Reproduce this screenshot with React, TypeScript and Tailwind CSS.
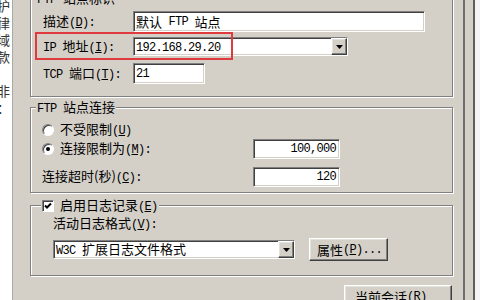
import React from 'react';

// classic win2k bevels
const sunken =
  'border border-t-[#808080] border-l-[#808080] border-r-white border-b-white shadow-[inset_1px_1px_0_#404040,inset_-1px_-1px_0_#d4d0c8] bg-white';
const raised =
  'border border-t-white border-l-white border-r-[#404040] border-b-[#404040] shadow-[inset_-1px_-1px_0_#808080,inset_1px_1px_0_#e4e2dc] bg-[#d4d0c8]';
const etched =
  'border border-[#808080] shadow-[inset_1px_1px_0_#ffffff,1px_1px_0_#ffffff] min-w-0';

function Lat({ children }: { children: React.ReactNode }) {
  return (
    <span className="font-['Liberation_Mono',monospace] text-[12px] tracking-[-0.7px] whitespace-pre">
      {children}
    </span>
  );
}

function Key({ k, colon }: { k: string; colon?: boolean }) {
  return (
    <Lat>
      (<u>{k}</u>){colon ? ':' : ''}
    </Lat>
  );
}

function DropButton() {
  return (
    <div className={`${raised} w-[16px] h-full flex items-center justify-center`}>
      <svg width="7" height="4" viewBox="0 0 7 4">
        <polygon points="0,0 7,0 3.5,4" fill="#000" />
      </svg>
    </div>
  );
}

function Radio({ checked }: { checked?: boolean }) {
  return (
    <div className="w-[12px] h-[12px] rounded-full border border-t-[#808080] border-l-[#808080] border-r-white border-b-white bg-white shadow-[inset_1px_1px_0_#404040] flex items-center justify-center">
      {checked && <div className="w-[4px] h-[4px] rounded-full bg-black" />}
    </div>
  );
}

function LeftStrip() {
  const chars = ['护', '律', '域', '款', '\u3000', '非', '：'];
  return (
    <div className="w-[12px] bg-white overflow-hidden shrink-0">
      <div className="-mt-[3px] -ml-[3px] leading-[17px] text-[13px] text-[#333]">
        {chars.map((c, i) => (
          <div key={i}>{c}</div>
        ))}
      </div>
    </div>
  );
}

export default function App() {
  return (
    <div className="w-[480px] h-[300px] overflow-hidden flex bg-[#d4d0c8] text-black font-['Noto_Sans_CJK_SC',sans-serif] text-[13px] leading-[16px]">
      <LeftStrip />
      <div className="w-px bg-[#a9a9a9] shrink-0" />

      <main className="w-[450px] shrink-0 pl-[17px] flex flex-col">
        {/* FTP 站点标识 */}
        <fieldset className={`${etched} w-[423px] -mt-[10px] pl-[5px]`}>
          <legend className="px-[1px] h-[16px] bg-[#d4d0c8]">
            <Lat>FTP </Lat>站点标识
          </legend>

          <div className="pt-[5px] pl-[7px] pb-[12px]">
            <div className="flex items-center h-[21px]">
              <div className="w-[90px]">
                描述<Key k="D" colon />
              </div>
              <div className={`${sunken} w-[292px] h-[21px] flex items-center pl-[2px]`}>
                默认<Lat> FTP </Lat>站点
              </div>
            </div>

            <div className="relative flex items-center h-[19px] mt-[5px]">
              <div className="w-[90px]">
                <Lat>IP </Lat>地址<Key k="I" colon />
              </div>
              <div className={`${sunken} w-[215px] h-[19px] flex items-center pl-[2px]`}>
                <div className="flex-1">
                  <Lat>192.168.29.20</Lat>
                </div>
                <DropButton />
              </div>
              {/* red annotation box */}
              <div className="absolute -left-[8px] -top-[5px] w-[198px] h-[28px] border-2 border-[#e0393e]" />
            </div>

            <div className="flex items-center h-[21px] mt-[7px]">
              <div className="w-[90px]">
                <Lat>TCP </Lat>端口<Key k="T" colon />
              </div>
              <div className={`${sunken} w-[72px] h-[21px] flex items-center pl-[2px]`}>
                <Lat>21</Lat>
              </div>
            </div>
          </div>
        </fieldset>

        {/* FTP 站点连接 */}
        <fieldset className={`${etched} w-[423px] mt-[2px] pl-[5px]`}>
          <legend className="px-[1px] h-[16px] bg-[#d4d0c8]">
            <Lat>FTP </Lat>站点连接
          </legend>

          <div className="pl-[6px] pb-[5px]">
            <div className="flex items-center gap-[6px] h-[16px] mt-[7px]">
              <Radio />
              <span>
                不受限制<Key k="U" />
              </span>
            </div>

            <div className="flex items-center h-[20px] mt-[1px]">
              <div className="w-[211px] flex items-center gap-[6px]">
                <Radio checked />
                <span>
                  连接限制为<Key k="M" colon />
                </span>
              </div>
              <div className={`${sunken} w-[87px] h-[20px] flex items-center justify-end pr-[3px]`}>
                <Lat>100,000</Lat>
              </div>
            </div>

            <div className="flex items-center h-[20px] mt-[8px]">
              <div className="w-[211px]">
                连接超时(秒)<Key k="C" colon />
              </div>
              <div className={`${sunken} w-[87px] h-[20px] flex items-center justify-end pr-[3px]`}>
                <Lat>120</Lat>
              </div>
            </div>
          </div>
        </fieldset>

        {/* 日志记录 */}
        <fieldset className={`${etched} w-[423px] mt-[4px] pl-[10px]`}>
          <legend className="px-[1px] h-[16px] bg-[#d4d0c8]">
            <span className="inline-flex items-center gap-[6px] h-[16px]">
              <span className="w-[12px] h-[12px] border border-t-[#808080] border-l-[#808080] border-r-white border-b-white bg-white shadow-[inset_1px_1px_0_#404040] flex items-center justify-center">
                <svg width="8" height="8" viewBox="0 0 8 8">
                  <polyline points="1,3.5 3,5.5 7,1.5" fill="none" stroke="#000" strokeWidth="2" />
                </svg>
              </span>
              <span>
                启用日志记录<Key k="E" />
              </span>
            </span>
          </legend>

          <div className="pl-[12px] pb-[14px]">
            <div className="mt-[2px] h-[16px]">
              活动日志格式<Key k="V" colon />
            </div>

            <div className="flex items-center gap-[14px] h-[23px] mt-[7px]">
              <div className={`${sunken} w-[242px] h-[19px] flex items-center pl-[2px]`}>
                <div className="flex-1">
                  <Lat>W3C </Lat>扩展日志文件格式
                </div>
                <DropButton />
              </div>
              <div className={`${raised} w-[79px] h-[23px] flex items-center pl-[7px]`}>
                属性<Key k="P" />
                <Lat>...</Lat>
              </div>
            </div>
          </div>
        </fieldset>

        <div className="mt-[9px] pl-[314px]">
          <div className={`${raised} w-[108px] h-[23px] flex items-center pl-[10px]`}>
            当前会话<Key k="R" />
          </div>
        </div>
      </main>

      <div className="w-[2px] bg-[#6e6e6e] shrink-0" />
      <div className="w-[8px] shrink-0" />
      <div className="w-[2px] bg-[#5e5e5e] shrink-0" />
      <div className="flex-1 bg-[#f4f4f4]" />
    </div>
  );
}
